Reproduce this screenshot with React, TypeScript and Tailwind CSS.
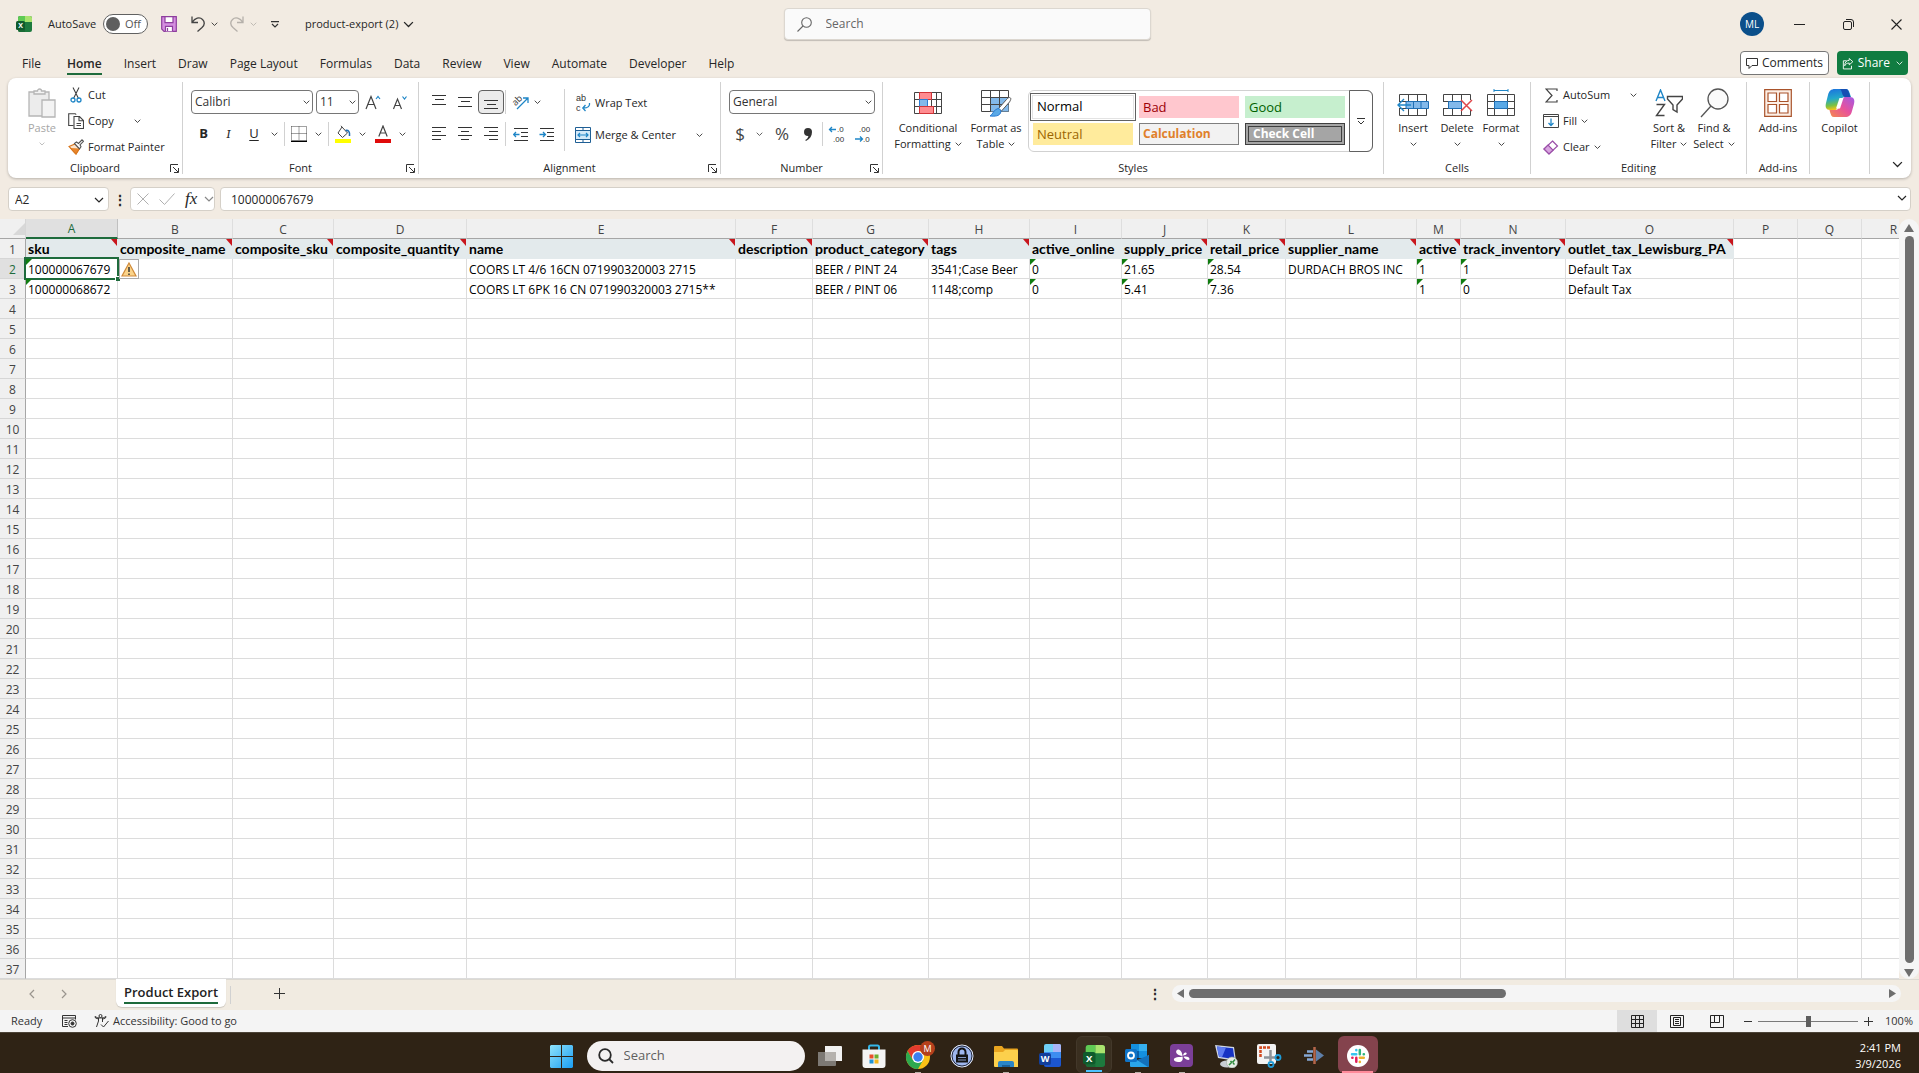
import type { ReactNode } from 'react'

type Column = {
  id: string
  width: number
  title?: string
  note?: boolean
}

const columns: Column[] = [
  { id: 'A', width: 92, title: 'sku', note: true },
  { id: 'B', width: 115, title: 'composite_name', note: true },
  { id: 'C', width: 101, title: 'composite_sku', note: true },
  { id: 'D', width: 133, title: 'composite_quantity', note: true },
  { id: 'E', width: 269, title: 'name', note: true },
  { id: 'F', width: 77, title: 'description', note: true },
  { id: 'G', width: 116, title: 'product_category', note: true },
  { id: 'H', width: 101, title: 'tags', note: true },
  { id: 'I', width: 92, title: 'active_online' },
  { id: 'J', width: 86, title: 'supply_price', note: true },
  { id: 'K', width: 78, title: 'retail_price', note: true },
  { id: 'L', width: 131, title: 'supplier_name', note: true },
  { id: 'M', width: 44, title: 'active', note: true },
  { id: 'N', width: 105, title: 'track_inventory', note: true },
  { id: 'O', width: 168, title: 'outlet_tax_Lewisburg_PA', note: true },
  { id: 'P', width: 64 },
  { id: 'Q', width: 64 },
  { id: 'R', width: 64 },
]

const cells: Record<string, string> = {
  A2: '100000067679',
  E2: 'COORS LT 4/6 16CN 071990320003 2715',
  G2: 'BEER / PINT 24',
  H2: '3541;Case Beer',
  I2: '0',
  J2: '21.65',
  K2: '28.54',
  L2: 'DURDACH BROS INC',
  M2: '1',
  N2: '1',
  O2: 'Default Tax',
  A3: '100000068672',
  E3: 'COORS LT 6PK 16 CN 071990320003 2715**',
  G3: 'BEER / PINT 06',
  H3: '1148;comp',
  I3: '0',
  J3: '5.41',
  K3: '7.36',
  M3: '1',
  N3: '0',
  O3: 'Default Tax',
}

// columns whose numbers are stored as text
const textNumbers = ['A', 'I', 'J', 'K', 'M', 'N']

const rows = Array.from({ length: 37 }, (_, i) => i + 1)

const tabs = ['File', 'Home', 'Insert', 'Draw', 'Page Layout', 'Formulas', 'Data', 'Review', 'View', 'Automate', 'Developer', 'Help']

const Chevron = ({ className = 'w-[7px]' }: { className?: string }) => (
  <svg viewBox="0 0 10 6" className={`${className} shrink-0`} fill="none" stroke="currentColor" strokeWidth="1.2">
    <path d="M1 1l4 4 4-4" />
  </svg>
)

const Divider = ({ className = 'h-6' }: { className?: string }) => (
  <span className={`${className} w-px shrink-0 bg-[#d1d1d1]`} />
)

/* ---------- ribbon ---------- */

type GroupProps = {
  label?: string
  width: string
  launcher?: boolean
  children: ReactNode
}

const Group = ({ label, width, launcher, children }: GroupProps) => (
  <section className={`${width} flex shrink-0 flex-col border-r border-[#d1d1d1]`}>
    <div className="flex h-[78px]">{children}</div>
    <div className="relative h-[14px] text-center leading-4">
      {label}
      {launcher && (
        <button aria-label={`${label} settings`} className="absolute top-1 right-[3px]">
          <svg viewBox="0 0 9 9" className="h-[9px] w-[9px]" fill="none" stroke="#333">
            <path d="M.5 8V.5H8M3 3l5 5M8.500 4v4.500H4" />
          </svg>
        </button>
      )}
    </div>
  </section>
)

const IconButton = ({ label, width = 'w-[26px]', active, children }: { label: string; width?: string; active?: boolean; children: ReactNode }) => (
  <button
    aria-label={label}
    className={`${width} flex h-6 shrink-0 items-center justify-center rounded ${active ? 'border border-[#616161] bg-[#ebebeb]' : ''}`}
  >
    {children}
  </button>
)

const SmallButton = ({ icon, label, drop }: { icon: ReactNode; label: string; drop?: 'near' | 'far' }) => (
  <button className="flex h-[26px] items-center gap-1 whitespace-nowrap">
    <span className="flex w-4 shrink-0 justify-center">{icon}</span>
    {label}
    {drop && <Chevron className={drop === 'far' ? 'ml-4 w-[7px]' : 'w-[7px]'} />}
  </button>
)

const BigButton = ({ icon, label, second, drop, width }: { icon: ReactNode; label: string; second?: string; drop?: boolean; width: string }) => (
  <button className={`${width} flex shrink-0 flex-col items-center pt-1 leading-4 whitespace-nowrap`}>
    <span className="flex h-[34px] items-center">{icon}</span>
    {label}
    <span className="flex h-4 items-center gap-1">
      {second}
      {drop && <Chevron />}
    </span>
  </button>
)

const alignPaths: Record<string, string> = {
  top: 'M0 1.5h14M3 5.5h9M0 10.5h14',
  middle: 'M0 3.5h14M3 7.5h9M0 12.5h14',
  bottom: 'M0 6.5h14M3 10.5h9M0 14.5h14',
  left: 'M0 1.5h14M0 5.5h9M0 9.5h14M0 13.5h9',
  center: 'M0 1.5h14M3 5.5h8M0 9.5h14M3 13.5h8',
  right: 'M0 1.5h14M5 5.5h9M0 9.5h14M5 13.5h9',
}

const Lines = ({ kind }: { kind: string }) => (
  <svg viewBox="0 0 14 16" className="h-4 w-[14px]" stroke="#333" fill="none">
    <path d={alignPaths[kind]} />
  </svg>
)

const Indent = ({ out }: { out?: boolean }) => (
  <svg viewBox="0 0 15 15" className="h-[15px] w-[15px]" fill="none" stroke="#333">
    <path d="M1 1.5h14M8 5.5h7M8 9.5h7M1 13.5h14" />
    <path d={out ? 'M6.5 7.5H.8M3 5L.6 7.5 3 10' : 'M.5 7.5h5.7M4 5l2.4 2.5L4 10'} stroke="#1f86c7" strokeWidth="1.3" />
  </svg>
)

const PasteIcon = () => (
  <svg viewBox="0 0 28 30" className="h-[30px] w-7" fill="#f3f3f3" stroke="#b5b5b5" strokeWidth="1.3">
    <path d="M1 4h20v24H1z" fill="#ececec" />
    <path d="M6 6V3h3.5a2 2 0 0 1 4 0H17v3z" />
    <path d="M14 12h13v17H14z" />
  </svg>
)

const CutIcon = () => (
  <svg viewBox="0 0 12 16" className="h-4 w-3" fill="none" stroke="#444" strokeWidth="1.1">
    <path d="M3 .5l5.500 11M9 .5L3.500 11.500" />
    <circle cx="3" cy="13" r="2" stroke="#1f86c7" strokeWidth="1.3" />
    <circle cx="9" cy="13" r="2" stroke="#1f86c7" strokeWidth="1.3" />
  </svg>
)

const CopyIcon = () => (
  <svg viewBox="0 0 16 16" className="h-4 w-4" fill="none" stroke="#444" strokeWidth="1.1">
    <path d="M5.500 12.500H.7V.7h6.500l1 1" />
    <path d="M6 3.500h5.500l4 4v8H6zM11 3.700v4h4M8.500 10.500h4.500M8.500 12.500h4.500" fill="#fff" />
  </svg>
)

const PainterIcon = () => (
  <svg viewBox="0 0 16 16" className="h-4 w-4" strokeWidth="1.1">
    <path d="M1 7.500l6-2.500 4.500 4.500-3.500 5.500z" fill="#fbe3cb" stroke="#d9771f" />
    <path d="M2.500 9l4 4.500L8 15l3.500-5.500" fill="#e8862c" stroke="#d9771f" />
    <path d="M6.500 4.500l2-1.500 2 1.500L14 .8l1.500 1.500-3.500 3.500 1 2-1.500 2z" fill="#fff" stroke="#555" />
  </svg>
)

const CondIcon = () => (
  <svg viewBox="0 0 28 22" className="h-[22px] w-7" fill="#fff" stroke="#444">
    <path d="M.5.5h27v21H.5zM.5 7.500h27M.5 14.500h27M5.500.5v21M22.500.5v21M17.500.5v21" />
    <path d="M5.500.5h12v7h-12z" fill="#ff8c90" stroke="#d13438" />
    <path d="M5.500 7.500h8v7h-8z" fill="#83b9ea" stroke="#2b7cd3" />
    <path d="M5.500 14.500h14v7h-14z" fill="#ff8c90" stroke="#d13438" />
  </svg>
)

const FormatTableIcon = () => (
  <svg viewBox="0 0 31 27" className="h-[27px] w-[31px]" fill="#fff" stroke="#444">
    <path d="M.5.5h27v21H.5z" />
    <path d="M9.500 7.500h18v14h-18z" fill="#83b9ea" stroke="none" />
    <path d="M.5 7.500h27M.5 14.500h27M9.500.5v21M18.500.5v21" />
    <path d="M28.500 7.500c2 .5 1.500 2 0 4.500l-8 9-3-2.500 8-9c1.500-1.500 2-2 3-2z" stroke="#555" />
    <path d="M17 18.500c2.500.5 3.500 2 2.500 4.500-1.500 3-5 3.500-10.500 3 3-1.500 3.500-6.500 8-7.500z" fill="#5aa9e6" stroke="#2b7cd3" />
  </svg>
)

const CellsIcon = ({ kind }: { kind: 'insert' | 'delete' | 'format' }) => (
  <svg viewBox="0 0 32 28" className="h-7 w-8" fill="#fff" stroke="#444">
    {kind === 'format' ? (
      <path d="M2.500 5.500h27v21h-27zM2.500 12.500h27M2.500 19.500h27M9.500 5.500v21M22.500 5.500v21" />
    ) : (
      <path d="M2.500 5.500h27v21h-27zM2.500 12.500h27M2.500 19.500h27M11.500 5.500v21M20.500 5.500v21" />
    )}
    {kind === 'insert' && (
      <>
        <path d="M1 13h8v6H1z" stroke="none" />
        <path d="M9 12.500h22.500v7H9z" fill="#83b9ea" stroke="#1f6fb5" />
        <path d="M16.500 12.500v7M24 12.500v7" stroke="#1f6fb5" />
        <path d="M1 16h13M7 10l-6 6 6 6" fill="none" stroke="#1f86c7" strokeWidth="1.4" />
      </>
    )}
    {kind === 'delete' && (
      <>
        <path d="M1 13h6v6H1z" stroke="none" />
        <path d="M7.500 12.500h13v7h-13z" fill="#83b9ea" stroke="#1f6fb5" />
        <path d="M21 11h10v10H21z" stroke="none" />
        <path d="M20 11l11 11M31 11L20 22" stroke="#e0474c" strokeWidth="1.5" />
      </>
    )}
    {kind === 'format' && (
      <>
        <path d="M9.500 12.500h13v7h-13z" fill="#5aa9e6" stroke="#1f6fb5" />
        <path d="M9 1.500h14M9 0v3M23 0v3" stroke="#1f86c7" />
      </>
    )}
  </svg>
)

const SortIcon = () => (
  <svg viewBox="0 0 28 28" className="h-7 w-7" fill="none" strokeWidth="1.4">
    <path d="M1 12L5.500 1 10 12M2.500 8.500h6" stroke="#1f86c7" />
    <path d="M1.500 15.500h8l-8 11h8" stroke="#444" />
    <path d="M12.500 7.500h15v2.500l-5.500 6v7l-4-2.500V16l-5.500-6z" stroke="#444" />
  </svg>
)

const FindIcon = () => (
  <svg viewBox="0 0 29 30" className="h-[30px] w-[29px]" fill="#fafafa" stroke="#555" strokeWidth="1.3">
    <circle cx="18" cy="11" r="10" />
    <path d="M11 18L1 29" />
  </svg>
)

const AddinsIcon = () => (
  <svg viewBox="0 0 28 28" className="h-7 w-7" fill="#fff" stroke="#a9532b" strokeWidth="1.2">
    <path d="M.7.7h26.600v26.600H.7z" fill="#fcefe6" />
    <path d="M4 4h8.500v8.500H4zM15.500 4H24v8.500h-8.500zM4 15.500h8.500V24H4zM15.500 15.500H24V24h-8.500z" />
  </svg>
)

const CopilotIcon = () => (
  <svg viewBox="0 0 30 30" className="h-[30px] w-[30px]">
    <defs>
      <linearGradient id="cp1" x1="0" y1="0" x2="0.2" y2="1">
        <stop offset="0" stopColor="#1b6fe0" />
        <stop offset="0.5" stopColor="#23a9c9" />
        <stop offset="0.8" stopColor="#7ac143" />
        <stop offset="1" stopColor="#f0c419" />
      </linearGradient>
      <linearGradient id="cp2" x1="1" y1="0" x2="0" y2="1">
        <stop offset="0" stopColor="#a259e6" />
        <stop offset="0.5" stopColor="#e8529b" />
        <stop offset="1" stopColor="#f58a4b" />
      </linearGradient>
    </defs>
    <path d="M18 1h3c2.500 0 3 2 4 5l1 3h-6c-3 0-4 2-5 5l-2 5c-1 2.500-2 3-4 3H5c-4 0-5-3-4-7l2-8c1-4 3-6 7-6z" fill="url(#cp1)" />
    <path d="M14 1h6c3 0 3.500 2 4.500 5l1 3h-5c-2 0-3-2-3.500-4S16 1 14 1z" fill="#164fb3" />
    <path d="M12 29H9c-2.500 0-3-2-4-5l-.5-2H10c3 0 4-2 5-5l2-5c1-2.500 2-3 4-3h4c4 0 5 3 4 7l-2 7c-1 4-3 6-7 6z" fill="url(#cp2)" />
    <path d="M14.500 10h4l-3.500 10.500h-4z" fill="#fff" />
  </svg>
)

const selectClass = 'h-6 w-full appearance-none rounded border border-[#767676] bg-white pl-[3px] text-[12px] leading-4 text-[#333]'

const Picker = ({ label, value, width }: { label: string; value: string; width: string }) => (
  <div className={`${width} relative shrink-0`}>
    <select aria-label={label} className={selectClass} defaultValue={value}>
      <option>{value}</option>
    </select>
    <Chevron className="pointer-events-none absolute top-[10px] right-[3px] w-[7px]" />
  </div>
)

const styleCell = 'flex h-[22px] w-[100px] items-center pl-1 leading-4'

const Ribbon = () => (
  <div className="mx-2 flex h-[100px] shrink-0 overflow-hidden rounded-lg bg-white pt-1 pb-1 text-[11px] text-[#262626] shadow-[0_1px_3px_rgba(0,0,0,0.25)]">
    <Group label="Clipboard" width="w-[175px]" launcher>
      <button disabled className="ml-3 flex w-11 flex-col items-center pt-1 leading-4 text-[#a6a6a6]">
        <span className="flex h-[34px] items-center"><PasteIcon /></span>
        Paste
        <span className="flex h-4 items-center"><Chevron className="w-[6px]" /></span>
      </button>
      <div className="ml-1 flex flex-col">
        <SmallButton icon={<CutIcon />} label="Cut" />
        <SmallButton icon={<CopyIcon />} label="Copy" drop="far" />
        <SmallButton icon={<PainterIcon />} label="Format Painter" />
      </div>
    </Group>

    <Group label="Font" width="w-[236px]" launcher>
      <div className="flex flex-col gap-2 pt-2 pl-2">
        <div className="flex items-center">
          <Picker label="Font name" value="Calibri" width="w-[122px]" />
          <span className="w-[3px]" />
          <Picker label="Font size" value="11" width="w-[43px]" />
          <IconButton label="Increase font size" width="w-[28px]">
            <svg viewBox="0 0 16 15" className="h-[15px] w-4" fill="none" stroke="#444" strokeWidth="1.2">
              <path d="M1 14L6 1.500 11 14M2.800 9.500h6.500" />
              <path d="M11 4l2-2.500L15 4" stroke="#1f86c7" />
            </svg>
          </IconButton>
          <IconButton label="Decrease font size">
            <svg viewBox="0 0 16 15" className="h-[15px] w-4" fill="none" stroke="#444" strokeWidth="1.2">
              <path d="M1.500 14L5.500 4l4 10M3 10.500h5" />
              <path d="M10.500 1.500L12.500 4l2-2.500" stroke="#1f86c7" />
            </svg>
          </IconButton>
        </div>
        <div className="flex items-center text-[13px]">
          <IconButton label="Bold" width="w-[25px]"><span className="font-bold">B</span></IconButton>
          <IconButton label="Italic" width="w-[25px]"><span className="font-serif italic">I</span></IconButton>
          <IconButton label="Underline"><span className="underline underline-offset-2">U</span></IconButton>
          <IconButton label="Underline options" width="w-[14px]"><Chevron /></IconButton>
          <Divider className="ml-[3px] h-6" />
          <IconButton label="Borders">
            <svg viewBox="0 0 16 16" className="ml-[2px] h-4 w-4" fill="none" stroke="#444">
              <path d="M.5.5h15v14M.5.5v14M8 .5v14M.5 7.500h15" strokeDasharray="1 1" />
              <path d="M0 15.200h16" stroke="#000" strokeWidth="1.6" />
            </svg>
          </IconButton>
          <IconButton label="Border options" width="w-[14px]"><Chevron /></IconButton>
          <Divider className="ml-[3px] h-6" />
          <IconButton label="Fill color">
            <svg viewBox="0 0 16 18" className="ml-[2px] h-[18px] w-4" fill="none" stroke="#444">
              <path d="M7 2l5.500 6-5 4.500L3 8zM7 2L6 .8" fill="#fff" />
              <path d="M10.500 5.500c3-.5 4.500 1 4 5.500" stroke="#1f6fb5" strokeWidth="1.6" />
              <path d="M0 14h16v4H0z" fill="#ff0" stroke="none" />
            </svg>
          </IconButton>
          <IconButton label="Fill options" width="w-[14px]"><Chevron /></IconButton>
          <IconButton label="Font color">
            <svg viewBox="0 0 16 18" className="ml-[2px] h-[18px] w-4" fill="none" stroke="#444" strokeWidth="1.2">
              <path d="M3.800 11.500L8 1l4.200 10.500M5.300 8h5.400" />
              <path d="M0 14h16v4H0z" fill="#e00b0b" stroke="none" />
            </svg>
          </IconButton>
          <IconButton label="Font color options" width="w-[14px]"><Chevron /></IconButton>
        </div>
      </div>
    </Group>

    <Group label="Alignment" width="w-[302px]" launcher>
      <div className="flex flex-col gap-2 pt-2 pl-[7px]">
        <div className="flex items-center">
          <IconButton label="Top align"><Lines kind="top" /></IconButton>
          <IconButton label="Middle align"><Lines kind="middle" /></IconButton>
          <IconButton label="Bottom align" active><Lines kind="bottom" /></IconButton>
          <Divider className="ml-px h-6" />
          <IconButton label="Orientation" width="w-[28px]">
            <svg viewBox="0 0 20 20" className="h-5 w-5 overflow-visible" fill="none" stroke="#444">
              <text x="3" y="12" transform="rotate(-45 7 10)" fontSize="9" fill="#333" stroke="none">ab</text>
              <path d="M7 17L17.500 6.500M13 6h5v5" stroke="#1f86c7" strokeWidth="1.3" />
            </svg>
          </IconButton>
          <Chevron />
        </div>
        <div className="flex items-center">
          <IconButton label="Align left"><Lines kind="left" /></IconButton>
          <IconButton label="Align center"><Lines kind="center" /></IconButton>
          <IconButton label="Align right"><Lines kind="right" /></IconButton>
          <Divider className="ml-px h-6" />
          <IconButton label="Decrease indent" width="w-[28px]"><Indent out /></IconButton>
          <IconButton label="Increase indent" width="w-[25px]"><Indent /></IconButton>
        </div>
      </div>
      <Divider className="mt-[7px] ml-[5px] h-[62px]" />
      <div className="flex flex-col gap-[6px] pt-2 pl-[10px]">
        <SmallButton
          label="Wrap Text"
          icon={
            <svg viewBox="0 0 16 20" className="h-5 w-4 overflow-visible font-['Liberation_Sans']" fill="none">
              <text x="1" y="8" fontSize="9" fill="#333">ab</text>
              <text x="1" y="18" fontSize="9" fill="#333">c</text>
              <path d="M14.500 10c.5 3-1 5-6.500 5M10.500 12L7.800 15l2.700 3" stroke="#1f86c7" strokeWidth="1.3" />
            </svg>
          }
        />
        <SmallButton
          label="Merge & Center"
          drop="far"
          icon={
            <svg viewBox="0 0 16 16" className="h-4 w-4" fill="none" stroke="#1f5f95">
              <path d="M.5.5h15v15H.5zM8 .5v3M8 12.500v3" />
              <path d="M.5 3.500h15v9H.5z" fill="#d3e9f9" />
              <path d="M3 8h10M5 6L3 8l2 2M11 6l2 2-2 2" stroke="#1f86c7" strokeWidth="1.2" />
            </svg>
          }
        />
      </div>
    </Group>

    <Group label="Number" width="w-[162px]" launcher>
      <div className="flex flex-col gap-2 pt-2 pl-2">
        <Picker label="Number format" value="General" width="w-[146px]" />
        <div className="flex items-center text-[17px] text-[#444]">
          <IconButton label="Accounting format" width="w-[22px]">$</IconButton>
          <IconButton label="Currency options" width="w-[16px]"><Chevron /></IconButton>
          <IconButton label="Percent style" width="w-[30px]">%</IconButton>
          <IconButton label="Comma style" width="w-[22px]">
            <svg viewBox="0 0 8 13" className="h-[13px] w-2" fill="#333">
              <path d="M4 0a4 4 0 0 1 4 4c0 4-2 7-6 9l-.8-1c2-1 3-2.500 3.200-4H4a4 4 0 0 1 0-8z" />
            </svg>
          </IconButton>
          <Divider className="ml-[3px] h-6" />
          <IconButton label="Increase decimal" width="w-[28px]">
            <svg viewBox="0 0 18 22" className="h-[22px] w-[18px] overflow-visible font-['Liberation_Sans']" fill="#333" fontSize="8">
              <text x="9" y="9">.0</text>
              <text x="5" y="19">.00</text>
              <path d="M8 6.500H1.500M4 4L1.500 6.500 4 9" fill="none" stroke="#1f86c7" strokeWidth="1.3" />
            </svg>
          </IconButton>
          <IconButton label="Decrease decimal" width="w-[24px]">
            <svg viewBox="0 0 18 22" className="h-[22px] w-[18px] overflow-visible font-['Liberation_Sans']" fill="#333" fontSize="8">
              <text x="5" y="9">.00</text>
              <text x="9" y="19">.0</text>
              <path d="M1 16h7.500M6 13.500L8.500 16 6 18.500" fill="none" stroke="#1f86c7" strokeWidth="1.3" />
            </svg>
          </IconButton>
        </div>
      </div>
    </Group>

    <Group label="Styles" width="w-[501px]">
      <BigButton width="ml-[7px] w-[76px]" icon={<CondIcon />} label="Conditional" second="Formatting" drop />
      <BigButton width="w-[60px]" icon={<FormatTableIcon />} label="Format as" second="Table" drop />
      <div className="mt-2 ml-[2px] flex h-[62px] rounded-md border border-[#d1d1d1]">
        <div className="flex flex-col gap-[2px] pt-[2px] pl-px">
          <div className="flex items-center gap-[3px]">
            <button className="flex h-7 w-[106px] items-center border border-[#616161] pl-[6px] text-[13px] text-black outline-1 -outline-offset-3 outline-[#e3e3e3]">Normal</button>
            <button className={`${styleCell} bg-[#ffc7ce] text-[13px] text-[#9c0006]`}>Bad</button>
            <button className={`${styleCell} ml-[3px] bg-[#c6efce] text-[13px] text-[#006100]`}>Good</button>
          </div>
          <div className="flex gap-[6px] pl-[3px]">
            <button className={`${styleCell} bg-[#ffeb9c] text-[13px] text-[#9c6500]`}>Neutral</button>
            <button className={`${styleCell} border border-[#7f7f7f] bg-[#f2f2f2] pl-[3px] text-[12px] font-bold text-[#e0802b]`}>Calculation</button>
            <button className={`${styleCell} border-4 border-double border-[#3f3f3f] bg-[#a5a5a5] pl-0 text-[12px] font-bold text-white`}>Check Cell</button>
          </div>
        </div>
        <button aria-label="More styles" className="-my-px -mr-px ml-[4px] flex w-6 items-center justify-center rounded-r-md border border-[#616161]">
          <svg viewBox="0 0 8 7" className="h-[7px] w-2" fill="none" stroke="#333">
            <path d="M0 .5h8M1 3l3 3 3-3" />
          </svg>
        </button>
      </div>
    </Group>

    <Group label="Cells" width="w-[147px]">
      <BigButton width="ml-[7px] w-11" icon={<CellsIcon kind="insert" />} label="Insert" drop />
      <BigButton width="w-11" icon={<CellsIcon kind="delete" />} label="Delete" drop />
      <BigButton width="w-11" icon={<CellsIcon kind="format" />} label="Format" drop />
    </Group>

    <Group label="Editing" width="w-[216px]">
      <div className="ml-3 flex w-[104px] flex-col">
        <SmallButton
          label="AutoSum"
          drop="far"
          icon={
            <svg viewBox="0 0 13 15" className="h-[15px] w-[13px]" fill="none" stroke="#444" strokeWidth="1.2">
              <path d="M12 3V1H1l6 6.500L1 14h11v-2" />
            </svg>
          }
        />
        <SmallButton
          label="Fill"
          drop="near"
          icon={
            <svg viewBox="0 0 16 14" className="h-[14px] w-4" fill="none" stroke="#444">
              <path d="M.5.5h15v13H.5zM.5 2.500h15" />
              <path d="M8 4.500v7M5.500 9L8 11.500 10.500 9" stroke="#1f86c7" strokeWidth="1.3" />
            </svg>
          }
        />
        <SmallButton
          label="Clear"
          drop="near"
          icon={
            <svg viewBox="0 0 16 15" className="h-[15px] w-4" fill="#fff" stroke="#9a4fa8" strokeWidth="1.2">
              <path d="M9.500 1L14.500 6 6 14 1 9z" />
              <path d="M5 5L10 10.200 6 14 1 9z" fill="#d9a5e0" />
            </svg>
          }
        />
      </div>
      <BigButton width="w-11" icon={<SortIcon />} label="Sort &" second="Filter" drop />
      <BigButton width="w-[46px]" icon={<FindIcon />} label="Find &" second="Select" drop />
    </Group>

    <Group label="Add-ins" width="w-[63px]">
      <BigButton width="w-[62px]" icon={<AddinsIcon />} label="Add-ins" />
    </Group>
    <Group width="w-[60px]">
      <BigButton width="w-[59px]" icon={<CopilotIcon />} label="Copilot" />
    </Group>
    <button aria-label="Collapse ribbon" className="mt-auto mr-1 mb-[2px] ml-auto p-1">
      <Chevron className="w-[11px]" />
    </button>
  </div>
)

/* ---------- title bar and tabs ---------- */

const ExcelLogo = ({ className }: { className: string }) => (
  <svg viewBox="0 0 16 16" className={`${className} overflow-visible`}>
    <rect x="2" width="14" height="16" rx="2" fill="#1d7a3e" />
    <path d="M4 0h5v6H2V2a2 2 0 0 1 2-2z" fill="#5fca54" />
    <path d="M9 0h5a2 2 0 0 1 2 2v4H9z" fill="#a9e36e" />
    <path d="M2 6h7v10H4a2 2 0 0 1-2-2z" fill="#1a6a35" />
    <rect y="5" width="9" height="9" rx="1.5" fill="#0f5a2c" />
    <text x="4.5" y="12" fontSize="7" fontWeight="700" fill="#fff" textAnchor="middle">X</text>
  </svg>
)

const TitleBar = () => (
  <header className="flex h-12 shrink-0 items-center justify-between text-[11px]">
    <div className="flex flex-1 items-center pl-4">
      <ExcelLogo className="h-4 w-4" />
      <label htmlFor="autosave" className="ml-4 w-[55px]">AutoSave</label>
      <button id="autosave" role="switch" aria-checked="false" className="flex h-5 w-[45px] items-center rounded-full border border-[#616161] bg-white pl-[2px] text-[#555]">
        <span className="mr-[5px] h-[14px] w-[14px] rounded-full bg-[#5f5f5f]" />
        Off
      </button>
      <button aria-label="Save" className="ml-[13px]">
        <svg viewBox="0 0 16 16" className="h-4 w-4" fill="#d58fe0" stroke="#8e3f9e" strokeWidth="1.2">
          <path d="M.7.7h14.600v14.600H3L.7 13z" />
          <path d="M4 .7h8v6H4zM4.500 15.300v-5h7v5" fill="#fff" />
          <path d="M6.500 12v3" />
        </svg>
      </button>
      <button aria-label="Undo" className="ml-[14px] flex items-center gap-[6px]">
        <svg viewBox="0 0 14 16" className="h-4 w-[14px]" fill="none" stroke="#444" strokeWidth="1.3">
          <path d="M1 .5v6h6M1 6.500C4 2 8.500.5 11.500 3.500s1.500 6-.5 8L6.500 15.500" />
        </svg>
        <Chevron />
      </button>
      <button aria-label="Redo" disabled className="ml-3 flex items-center gap-[6px] text-[#b5b0aa]">
        <svg viewBox="0 0 14 16" className="h-4 w-[14px]" fill="none" stroke="currentColor" strokeWidth="1.3">
          <path d="M13 .5v6H7M13 6.500C10 2 5.500.5 2.500 3.500s-1.500 6 .5 8l4.500 4" />
        </svg>
        <Chevron />
      </button>
      <button aria-label="Customize toolbar" className="ml-[14px]">
        <svg viewBox="0 0 8 7" className="h-[7px] w-2" fill="none" stroke="#333" strokeWidth="1.2">
          <path d="M0 .6h8M1 3l3 3 3-3" />
        </svg>
      </button>
      <button className="ml-[26px] flex items-center gap-[5px] pt-px">
        product-export (2)
        <Chevron className="w-[11px]" />
      </button>
    </div>
    <div className="flex h-8 w-[367px] items-center rounded border border-[#dcd7d0] bg-[#fafafa] pl-3 shadow-[0_1px_1px_rgba(0,0,0,0.2)]">
      <svg viewBox="0 0 15 15" className="h-[15px] w-[15px]" fill="none" stroke="#666" strokeWidth="1.1">
        <circle cx="9.5" cy="5.5" r="4.8" />
        <path d="M6 9L.5 14.500" />
      </svg>
      <input aria-label="Search" placeholder="Search" className="ml-[14px] flex-1 bg-transparent text-[12px] outline-none placeholder:text-[#666]" />
    </div>
    <div className="-ml-4 flex flex-1 items-center justify-end pr-[17px]">
      <button className="mr-[30px] h-6 w-6 rounded-full bg-[#0b4f8a] text-[10px] text-white">ML</button>
      <button aria-label="Minimize" className="mr-[38px] h-px w-[11px] bg-[#222]" />
      <button aria-label="Restore" className="mr-[37px]">
        <svg viewBox="0 0 11 11" className="h-[11px] w-[11px]" fill="none" stroke="#222">
          <rect x=".5" y="2.5" width="8" height="8" rx="1.5" />
          <path d="M3 .5h5a2.500 2.500 0 0 1 2.500 2.500v5" />
        </svg>
      </button>
      <button aria-label="Close">
        <svg viewBox="0 0 11 11" className="h-[11px] w-[11px]" fill="none" stroke="#222" strokeWidth="1.1">
          <path d="M.5.5l10 10M10.500.5l-10 10" />
        </svg>
      </button>
    </div>
  </header>
)

const TabBar = () => (
  <nav className="flex h-[30px] shrink-0 items-center pl-[22px] text-[12px]">
    {tabs.map((t) => (
      <button
        key={t}
        className={t === 'Home'
          ? 'mr-[22px] ml-1 h-6 border-b-2 border-[#1e6b3c] pt-[3px] font-semibold'
          : 'mr-[22px] h-6 pt-px'}
      >
        {t}
      </button>
    ))}
    <button className="ml-auto flex h-6 items-center gap-1 rounded border border-[#767676] bg-white px-[5px]">
      <svg viewBox="0 0 12 12" className="h-3 w-3" fill="none" stroke="#333">
        <path d="M.5 1.500h11v7H6L3 11.500v-3H.5z" />
      </svg>
      Comments
    </button>
    <button className="mr-[11px] ml-2 flex h-6 w-[71px] items-center gap-1 rounded bg-[#107c41] px-[5px] text-white">
      <svg viewBox="0 0 13 13" className="h-[13px] w-[13px]" fill="none" stroke="#fff">
        <path d="M5 3.500H1.500v9h9V9M8 1l4 3.500L8 8V6C5.500 6 4 7 3 9c0-4 2-6 5-6z" />
      </svg>
      Share
      <Chevron className="ml-[2px] w-[7px]" />
    </button>
  </nav>
)

const FormulaBar = () => (
  <div className="my-[9px] mb-2 flex h-6 shrink-0 items-center px-2 text-[12px]">
    <div className="relative h-6 w-[101px]">
      <input aria-label="Name box" defaultValue="A2" className="h-6 w-full rounded border border-[#d5d0c8] bg-white pl-[6px]" />
      <Chevron className="absolute top-[10px] right-[5px] w-[10px]" />
    </div>
    <span className="w-[21px] text-center text-[14px] font-bold">⋮</span>
    <div className="flex h-6 w-[85px] items-center rounded border border-[#d5d0c8] bg-white pl-[6px]">
      <button aria-label="Cancel" disabled>
        <svg viewBox="0 0 12 12" className="h-3 w-3" stroke="#b0b0b0"><path d="M.5.5l11 11M11.500.5l-11 11" /></svg>
      </button>
      <button aria-label="Enter" disabled className="ml-[10px]">
        <svg viewBox="0 0 16 12" className="h-3 w-4" fill="none" stroke="#b0b0b0"><path d="M.5 6.500l5 5L15.500.5" /></svg>
      </button>
      <button aria-label="Insert function" className="ml-[10px] font-['Liberation_Serif'] text-[17px] leading-5 italic">fx</button>
      <Chevron className="ml-[7px] w-[10px] text-[#888]" />
    </div>
    <div className="relative ml-[5px] h-6 flex-1">
      <input aria-label="Formula" defaultValue="100000067679" className="h-6 w-full rounded border border-[#d5d0c8] bg-white pl-[10px]" />
      <Chevron className="absolute top-[8px] right-1 w-[10px]" />
    </div>
  </div>
)

/* ---------- sheet ---------- */

const NoteMark = () => (
  <svg viewBox="0 0 6 7" className="absolute top-0 right-px h-[7px] w-[6px]" fill="#c8161d">
    <path d="M0 0h6v7z" />
  </svg>
)

const TextMark = () => (
  <svg viewBox="0 0 6 6" className="absolute top-0 left-0 h-[6px] w-[6px]" fill="#107c10">
    <path d="M0 0h6L0 6z" />
  </svg>
)

const Cell = ({ column, row }: { column: Column; row: number }) => {
  if (row === 1) {
    return (
      <td className={`relative h-5 border-b p-0 pl-[2px] font-[Lato] text-[14px] leading-[19px] font-bold ${column.title ? 'border-[#e3eaec] bg-[#e3eaec]' : 'border-r border-[#dcdcdc]'}`}>
        {column.title}
        {column.note && <NoteMark />}
      </td>
    )
  }
  const value = cells[`${column.id}${row}`]
  return (
    <td className="relative h-5 border-r border-b border-[#dcdcdc] p-0 pt-[2px] pl-[2px] leading-[17px]">
      {value}
      {value && textNumbers.includes(column.id) && <TextMark />}
      {column.id === 'A' && row === 2 && (
        <>
          <span className="absolute -top-[2px] -right-[2px] -bottom-[2px] -left-[2px] border-2 border-[#1e6b3c]" />
          <span className="absolute -right-[3px] -bottom-[3px] z-10 h-[5px] w-[5px] border-t border-l border-white bg-[#1e6b3c]" />
          <button aria-label="Error options" className="absolute top-0 left-[93px] z-10 flex h-5 w-5 items-center justify-center border border-[#ababab] bg-white">
            <svg viewBox="0 0 16 15" className="h-[15px] w-4" fill="#fbd48a" stroke="#d08a3a" strokeWidth="1.2">
              <path d="M8 1l7 13H1z" />
              <path d="M8 5v5M8 11.500v1.500" stroke="#333" strokeWidth="1.5" />
            </svg>
          </button>
        </>
      )}
    </td>
  )
}

const Sheet = () => (
  <div className="flex min-h-0 flex-1">
    <div className="min-w-0 flex-1 overflow-hidden bg-white">
      <table className="w-[1926px] table-fixed border-separate border-spacing-0 text-[12px] whitespace-nowrap text-black">
        <colgroup>
          <col style={{ width: 26 }} />
          {columns.map((c) => <col key={c.id} style={{ width: c.width }} />)}
        </colgroup>
        <thead>
          <tr className="text-[#444]">
            <th className="h-5 border-r border-b border-[#a6a6a6] border-r-[#d6d6d6] bg-[#f0f0f0] p-0">
              <svg viewBox="0 0 12 12" className="ml-auto h-3 w-3" fill="#d8d8d8"><path d="M12 0v12H0z" /></svg>
            </th>
            {columns.map((c) => (
              <th
                key={c.id}
                className={`h-5 border-r p-0 pt-[2px] leading-4 font-normal ${c.id === 'A'
                  ? 'border-b-2 border-[#1e6b3c] border-r-[#c0c0c0] bg-[#e0e0e0] text-[#1e6b3c]'
                  : 'border-b border-[#a6a6a6] border-r-[#dedede] bg-[#f0f0f0]'}`}
              >
                {c.id}
              </th>
            ))}
          </tr>
        </thead>
        <tbody>
          {rows.map((r) => (
            <tr key={r}>
              <th className={`h-5 border-r border-b border-[#d6d6d6] border-r-[#a6a6a6] p-0 pt-[2px] leading-[17px] font-normal ${r === 2 ? 'bg-[#e0e0e0] text-[#1e6b3c]' : 'bg-[#f0f0f0] text-[#444]'}`}>
                {r}
              </th>
              {columns.map((c) => <Cell key={c.id} column={c} row={r} />)}
            </tr>
          ))}
        </tbody>
      </table>
    </div>
    <div className="flex w-5 shrink-0 flex-col items-center rounded-full bg-[#f5f5f5] pt-[5px] pb-[2px]">
      <svg viewBox="0 0 10 8" className="h-2 w-[10px]" fill="#6e6e6e"><path d="M5 0l5 8H0z" /></svg>
      <div className="mt-1 mb-[6px] w-[9px] flex-1 rounded-full bg-[#6e6e6e]" />
      <svg viewBox="0 0 10 8" className="h-2 w-[10px]" fill="#6e6e6e"><path d="M0 0h10L5 8z" /></svg>
    </div>
  </div>
)

const SheetTabs = () => (
  <div className="flex h-[31px] shrink-0 items-start border-t border-[#dcd9d2] bg-[#f1ebe1]">
    <div className="flex h-7 w-[116px] items-center gap-[22px] pl-[27px] text-[#9a958e]">
      <button aria-label="Previous sheet"><Chevron className="w-[10px] rotate-90" /></button>
      <button aria-label="Next sheet"><Chevron className="w-[10px] -rotate-90" /></button>
    </div>
    <div className="-mt-px flex h-7 items-start rounded-b-md bg-white px-2 pt-[3px] shadow-[0_1px_1px_rgba(0,0,0,0.15)]">
      <button className="border-b-2 border-[#1e6b3c] text-[13px] leading-5 font-semibold text-[#222]">Product Export</button>
    </div>
    <Divider className="mt-[6px] ml-[4px] h-[18px]" />
    <button aria-label="New sheet" className="mt-2 ml-[43px]">
      <svg viewBox="0 0 11 11" className="h-[11px] w-[11px]" stroke="#333"><path d="M5.500 0v11M0 5.500h11" /></svg>
    </button>
    <span className="mt-1 mr-[10px] ml-auto text-[14px] leading-5 font-bold">⋮</span>
    <div className="mt-[5px] mr-[18px] flex h-[17px] w-[38%] items-center rounded-full bg-[#f5f5f5] px-[5px]">
      <svg viewBox="0 0 7 9" className="h-[9px] w-[7px]" fill="#6e6e6e"><path d="M7 0v9L0 4.500z" /></svg>
      <div className="ml-[5px] h-[9px] w-[317px] rounded-full bg-[#6e6e6e]" />
      <svg viewBox="0 0 7 9" className="ml-auto h-[9px] w-[7px]" fill="#6e6e6e"><path d="M0 0v9l7-4.500z" /></svg>
    </div>
  </div>
)

const StatusBar = () => (
  <footer className="flex h-[22px] shrink-0 items-center bg-[#f4f4f4] pl-[11px] text-[11px] text-[#333]">
    <span className="w-[51px]">Ready</span>
    <svg viewBox="0 0 15 13" className="h-[13px] w-[15px]" fill="none" stroke="#333">
      <path d="M6 11.500H.5V.5h13v4M.5 3h13M2.500 5.500h3M2.500 7.500h3M2.500 9.500h3" />
      <circle cx="10.5" cy="8.5" r="3.8" />
      <circle cx="10.5" cy="8.5" r="1.5" fill="#333" />
    </svg>
    <svg viewBox="0 0 15 14" className="mr-1 ml-[17px] h-[14px] w-[15px]" fill="none" stroke="#333">
      <circle cx="6.5" cy="2" r="1.5" />
      <path d="M1 2.500c3 2 8 2 11 0M4.500 4v3L2.500 13M8.500 4v4M1 2.500l.5 1.500 3 1M12 2.500L11.500 4l-2.500 1M7 10.500l2.500 2.500L14.500 7" />
    </svg>
    <button>Accessibility: Good to go</button>
    <div className="ml-auto flex h-full items-center">
      <button aria-label="Normal view" className="flex h-full w-10 items-center justify-center bg-[#dedede]">
        <svg viewBox="0 0 13 13" className="h-[13px] w-[13px]" fill="none" stroke="#222"><path d="M.5.5h12v12H.5zM.5 4.500h12M.5 8.500h12M4.500.5v12M8.500.5v12" /></svg>
      </button>
      <button aria-label="Page layout view" className="flex h-full w-10 items-center justify-center">
        <svg viewBox="0 0 14 13" className="h-[13px] w-[14px]" fill="none" stroke="#222"><path d="M.5.5h13v12H.5zM3.500 2.500h7v8h-7zM5 4.500h4M5 6.500h4M5 8.500h4" /></svg>
      </button>
      <button aria-label="Page break view" className="flex h-full w-10 items-center justify-center">
        <svg viewBox="0 0 14 13" className="h-[13px] w-[14px]" fill="none" stroke="#222"><path d="M.5.5h13v12H.5zM4.500.5v7h5v-7M.5 7.500h4" /></svg>
      </button>
      <button aria-label="Zoom out" className="ml-[7px] h-px w-2 bg-[#333]" />
      <div className="relative mx-[6px] flex h-full w-[100px] items-center">
        <span className="h-px w-full bg-[#7a7a7a]" />
        <span className="absolute left-[48px] h-[11px] w-[5px] bg-[#5e5e5e]" />
        <input type="range" aria-label="Zoom" min="10" max="400" defaultValue="100" className="absolute inset-0 w-full opacity-0" />
      </div>
      <button aria-label="Zoom in">
        <svg viewBox="0 0 9 9" className="h-[9px] w-[9px]" stroke="#333"><path d="M4.500 0v9M0 4.500h9" /></svg>
      </button>
      <button className="mr-[6px] ml-3">100%</button>
    </div>
  </footer>
)

/* ---------- taskbar ---------- */

const apps: { name: string; state?: 'open' | 'active' | 'alert'; icon: ReactNode }[] = [
  {
    name: 'Task view',
    icon: (
      <svg viewBox="0 0 24 24" className="h-6 w-6">
        <path d="M7 2h16a1 1 0 0 1 1 1v14H7z" fill="#f1f1f1" />
        <path d="M0 8h18v13a1 1 0 0 1-1 1H0z" fill="#7d7974" />
        <path d="M7 8h11v9H7z" fill="#b5b2ae" />
      </svg>
    ),
  },
  {
    name: 'Store',
    icon: (
      <svg viewBox="0 0 24 24" className="h-6 w-6">
        <path d="M7 6V3a1.500 1.500 0 0 1 1.500-1.500h7A1.500 1.500 0 0 1 17 3v3" fill="none" stroke="#35b6e8" strokeWidth="2" />
        <path d="M.5 5.500h23V21a3 3 0 0 1-3 3h-17a3 3 0 0 1-3-3z" fill="#f4f4f4" />
        <path d="M7.500 10.500h4v4h-4z" fill="#e8502b" />
        <path d="M12.500 10.500h4v4h-4z" fill="#6fae2d" />
        <path d="M7.500 15.500h4v4h-4z" fill="#1f93d6" />
        <path d="M12.500 15.500h4v4h-4z" fill="#f3b41b" />
      </svg>
    ),
  },
  {
    name: 'Chrome',
    state: 'open',
    icon: (
      <svg viewBox="0 0 30 28" className="mb-[2px] ml-1 h-7 w-[30px] overflow-visible">
        <circle cx="13" cy="16" r="12" fill="#fbc116" />
        <path d="M2.600 10A12 12 0 0 1 23.400 10H13l-5.200 9z" fill="#e33b2e" />
        <path d="M2.600 10A12 12 0 0 0 13 28l5.200-9H7.800z" fill="#2da94f" />
        <circle cx="13" cy="16" r="6" fill="#fff" />
        <circle cx="13" cy="16" r="4.7" fill="#3b7ff0" />
        <circle cx="22.5" cy="7.5" r="7.5" fill="#b5401c" />
        <text x="22.5" y="11" fontSize="9" fill="#fff" textAnchor="middle">M</text>
      </svg>
    ),
  },
  {
    name: 'KeePass',
    icon: (
      <svg viewBox="0 0 24 24" className="h-6 w-6">
        <circle cx="12" cy="12" r="11" fill="#9db6ee" stroke="#e8edf8" />
        <circle cx="12" cy="12" r="10" fill="none" stroke="#22283c" />
        <path d="M8.500 11V8a3.500 3.500 0 0 1 7 0v3" fill="none" stroke="#111" strokeWidth="2" />
        <path d="M6 10.500h12v8H6z" fill="#141414" />
        <path d="M8 13.500h8M8 16h8" stroke="#9db6ee" strokeWidth=".8" />
      </svg>
    ),
  },
  {
    name: 'File Explorer',
    state: 'open',
    icon: (
      <svg viewBox="0 0 24 22" className="h-[22px] w-6">
        <path d="M0 2a1 1 0 0 1 1-1h7l2 2.500h13a1 1 0 0 1 1 1V20H0z" fill="#e9a520" />
        <path d="M0 7h9l2-2h12a1 1 0 0 1 1 1v16H1a1 1 0 0 1-1-1z" fill="#fcd04c" />
        <path d="M4 22v-4a2 2 0 0 1 2-2h12a2 2 0 0 1 2 2v4z" fill="#2a85c7" />
        <path d="M8 22v-2h8v2z" fill="#1a5f98" />
      </svg>
    ),
  },
  {
    name: 'Word',
    icon: (
      <svg viewBox="0 0 22 23" className="h-[23px] w-[22px] overflow-visible">
        <path d="M5 2a2 2 0 0 1 2-2h13a2 2 0 0 1 2 2v7H5z" fill="#6fd0f7" />
        <path d="M14 0h6a2 2 0 0 1 2 2v7l-8 2z" fill="#a9b4f7" />
        <path d="M5 8h17v7H5z" fill="#3d8df0" />
        <path d="M5 14h17v7a2 2 0 0 1-2 2H7a2 2 0 0 1-2-2z" fill="#1c56d0" />
        <rect y="9" width="12" height="12" rx="2" fill="#123f9c" />
        <text x="6" y="18" fontSize="9" fontWeight="700" fill="#fff" textAnchor="middle">W</text>
      </svg>
    ),
  },
  { name: 'Excel', state: 'active', icon: <ExcelLogo className="h-[22px] w-[22px]" /> },
  {
    name: 'Outlook',
    state: 'open',
    icon: (
      <svg viewBox="0 0 25 23" className="h-[23px] w-[25px]">
        <path d="M6 0h16v14H6z" fill="#1490df" />
        <path d="M14 0h8v7h-8z" fill="#35b0f0" />
        <path d="M6 7h8v7H6z" fill="#0a5ea8" />
        <path d="M5 11l9 6 10-6v11a1 1 0 0 1-1 1H6a1 1 0 0 1-1-1z" fill="#2aa5ea" />
        <path d="M24 11v11a1 1 0 0 1-1 1L12 16z" fill="#1371bd" />
        <rect y="5" width="12" height="13" rx="1.5" fill="#0f74c8" />
        <circle cx="6" cy="11.5" r="3" fill="none" stroke="#fff" strokeWidth="1.8" />
      </svg>
    ),
  },
  {
    name: 'Splashtop',
    state: 'open',
    icon: (
      <svg viewBox="0 0 23 23" className="h-[23px] w-[23px]" fill="#fff">
        <rect width="23" height="23" rx="4" fill="#7b3f98" />
        <path d="M12.500 12C8 11.500 5 9 6.500 6.500S12 6 12.500 12z" />
        <path d="M13 11.500c.5-2.500 2-3.500 3.200-2.800s.3 2.300-3.200 2.800z" />
        <path d="M13.500 13c2.500-1 5.500 0 6 1.800s-3.500 1.700-6-1.800z" />
        <path d="M12.500 12.500c1 3.500-1 6-4.500 5.500S2.500 15.500 5 14s5-.5 7.500-1.500z" />
      </svg>
    ),
  },
  {
    name: 'Remote Desktop',
    icon: (
      <svg viewBox="0 0 24 24" className="h-6 w-6">
        <path d="M1 1l19 2 2 14-18-3z" fill="#cfd6e4" />
        <path d="M3 2.500l16 1.800 1.500 11-15.500-2.500z" fill="#1733c4" />
        <path d="M3 2.500l9 1-4 9.800-3-.5z" fill="#5f7cf0" />
        <ellipse cx="13" cy="20" rx="7" ry="3.5" fill="#c9cdd3" />
        <circle cx="18" cy="18.5" r="5.5" fill="#e6ece6" stroke="#9aa59a" strokeWidth=".6" />
        <path d="M15 21l2.500-2.500M16.500 17l1.500 1.500M21 15.500L18.500 18.500M19 19l1.500 1.500" stroke="#2d8a3c" strokeWidth="1.5" />
      </svg>
    ),
  },
  {
    name: 'Snipping Tool',
    icon: (
      <svg viewBox="0 0 25 25" className="h-[25px] w-[25px]">
        <rect y="1" width="19" height="20" rx="2" fill="#f3f3f3" />
        <path d="M3.500 14V4.500H14" fill="none" stroke="#d24a1f" strokeWidth="2.5" strokeDasharray="3 1" />
        <path d="M13.500 7v11M7 14.500h12" stroke="#8f9499" strokeWidth="2.5" />
        <circle cx="21" cy="14.5" r="2.5" fill="none" stroke="#1e9bd7" strokeWidth="1.8" />
        <circle cx="14" cy="21.5" r="2.5" fill="none" stroke="#1e9bd7" strokeWidth="1.8" />
      </svg>
    ),
  },
  {
    name: 'Launcher',
    icon: (
      <svg viewBox="0 0 20 17" className="h-[17px] w-5">
        <path d="M12 2.500l8 6-8 6z" fill="#5f7fa8" />
        <path d="M3 4.500h6M0 8.500h8M3 12.500h6" stroke="#86a8d4" strokeWidth="2.5" />
        <path d="M10.500 0v17" stroke="#b5664a" strokeWidth="2.5" />
      </svg>
    ),
  },
  {
    name: 'Slack',
    state: 'alert',
    icon: (
      <svg viewBox="0 0 22 22" className="h-[22px] w-[22px]" strokeWidth="2.5" strokeLinecap="round">
        <circle cx="11" cy="11" r="11" fill="#fff" />
        <path d="M9.300 5v.2M5 9.300h4.300" stroke="#36c5f0" />
        <path d="M12.800 5v4.200M16.700 9.300h.2" stroke="#2eb67d" />
        <path d="M12.800 12.800h4M12.800 16.700v.2" stroke="#ecb22e" />
        <path d="M9.300 12.800v4M5.300 12.800h.2" stroke="#e01e5a" />
      </svg>
    ),
  },
]

const markClass = {
  open: 'h-px w-[6px] bg-[#b8b0a8]',
  active: 'h-[2px] w-4 bg-[#4cc2ff]',
  alert: 'h-[2px] w-[31px] bg-[#ff8a9a]',
}

const tileClass = {
  open: '',
  active: 'mx-1 rounded-md border border-[#43382a] bg-[#3a2f20]',
  alert: 'mx-[2px] rounded-md bg-[#84434d]',
}

const Taskbar = () => (
  <div className="relative flex h-[41px] shrink-0 justify-center gap-[3px] overflow-hidden border-t border-[#4c4337] bg-[#2f2315]">
    <button aria-label="Start" className="flex w-11 items-center justify-center pt-[6px]">
      <svg viewBox="0 0 23 23" className="h-[23px] w-[23px]">
        <defs>
          <linearGradient id="win" x1="0" y1="0" x2="1" y2="1">
            <stop offset="0" stopColor="#8fe3fb" />
            <stop offset="1" stopColor="#1a9df2" />
          </linearGradient>
        </defs>
        <path d="M1 0h10v11H0V1zM12 0h10l1 1v10H12zM0 12h11v11H1l-1-1zM12 12h11v10l-1 1H12z" fill="url(#win)" />
      </svg>
    </button>
    <div className="mt-2 flex h-[30px] w-[218px] items-center rounded-full bg-[#f3f1f1] pl-[11px]">
      <svg viewBox="0 0 16 16" className="h-4 w-4" fill="none" stroke="#2a2a2a" strokeWidth="1.8">
        <circle cx="7" cy="7" r="5.8" />
        <path d="M11 11l4 4" />
      </svg>
      <input aria-label="Taskbar search" placeholder="Search" className="ml-[10px] w-32 bg-transparent text-[13px] outline-none placeholder:text-[#5f5f5f]" />
    </div>
    <div className="flex">
      {apps.map((a) => (
        <button key={a.name} aria-label={a.name} className="flex w-11">
          <span className={`relative mt-[3px] flex h-[37px] flex-1 items-center justify-center pt-[2px] ${a.state ? tileClass[a.state] : ''}`}>
            {a.icon}
            {a.state && <span className={`absolute bottom-0 ${markClass[a.state]}`} />}
          </span>
        </button>
      ))}
    </div>
    <div className="absolute top-[7px] right-[18px] text-right text-[11px] leading-4 text-white">
      <div>2:41 PM</div>
      <div>3/9/2026</div>
    </div>
  </div>
)

const App = () => (
  <div className="flex h-screen flex-col overflow-hidden bg-[#f2ebe2] font-['Open_Sans','Noto_Sans',sans-serif] text-[#262626]">
    <TitleBar />
    <TabBar />
    <Ribbon />
    <FormulaBar />
    <Sheet />
    <SheetTabs />
    <StatusBar />
    <Taskbar />
  </div>
)

export default App
